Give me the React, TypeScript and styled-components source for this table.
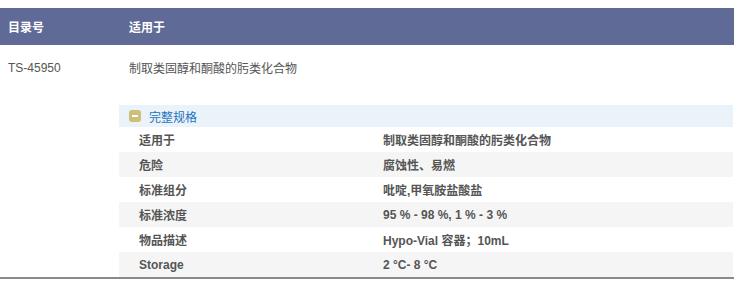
import { FC } from "react";
import styled, { createGlobalStyle } from "styled-components";

const GlobalStyle = createGlobalStyle`
  body {
    margin: 0;
    padding-top: 8px;
    background: #ffffff;
    font-family: "Liberation Sans", "Noto Sans CJK SC", sans-serif;
    font-size: 12px;
    color: #555555;
  }
`;

const Table = styled.div`
  width: 734px;
  border-bottom: 2px solid #8a8a8a;
`;

const HeaderRow = styled.div`
  display: grid;
  grid-template-columns: 121px 1fr;
  align-items: center;
  height: 37px;
  padding: 0 8px;
  background-color: #5f6a96;
  color: #ffffff;
  font-weight: bold;
`;

const DataRow = styled.div`
  display: grid;
  grid-template-columns: 121px 1fr;
  align-items: center;
  height: 45px;
  padding: 0 8px;
  color: #555555;
`;

const Specs = styled.div`
  display: flex;
  flex-direction: column;
  margin: 15px 1px 0 119px;
`;

const SpecsTitle = styled.div`
  display: flex;
  align-items: center;
  gap: 8px;
  height: 22px;
  padding-left: 10px;
  background-color: #eaf2fa;
  color: #1e72c2;
`;

const ToggleIcon = styled.span`
  display: flex;
  align-items: center;
  justify-content: center;
  width: 12px;
  height: 12px;
  border-radius: 3px;
  background-color: #cdbf78;

  &::after {
    content: "";
    width: 6px;
    height: 2px;
    background: #ffffff;
  }
`;

const SpecRow = styled.div<{ $shade: boolean }>`
  display: grid;
  grid-template-columns: 244px 1fr;
  align-items: center;
  height: 25px;
  padding-left: 20px;
  background-color: ${(p) => (p.$shade ? "#f5f5f5" : "#ffffff")};
  color: #555555;
  font-weight: bold;
`;

const specs = [
  ["适用于", "制取类固醇和酮酸的肟类化合物"],
  ["危险", "腐蚀性、易燃"],
  ["标准组分", "吡啶,甲氧胺盐酸盐"],
  ["标准浓度", "95 % - 98 %, 1 % - 3 %"],
  ["物品描述", "Hypo-Vial 容器；10mL"],
  ["Storage", "2 °C- 8 °C"],
];

const App: FC = () => {
  return (
    <>
      <GlobalStyle />
      <Table>
        <HeaderRow>
          <span>目录号</span>
          <span>适用于</span>
        </HeaderRow>
        <DataRow>
          <span>TS-45950</span>
          <span>制取类固醇和酮酸的肟类化合物</span>
        </DataRow>
        <Specs>
          <SpecsTitle>
            <ToggleIcon />
            <span>完整规格</span>
          </SpecsTitle>
          {specs.map(([label, value], i) => (
            <SpecRow key={label} $shade={i % 2 === 1}>
              <span>{label}</span>
              <span>{value}</span>
            </SpecRow>
          ))}
        </Specs>
      </Table>
    </>
  );
};

export default App;
